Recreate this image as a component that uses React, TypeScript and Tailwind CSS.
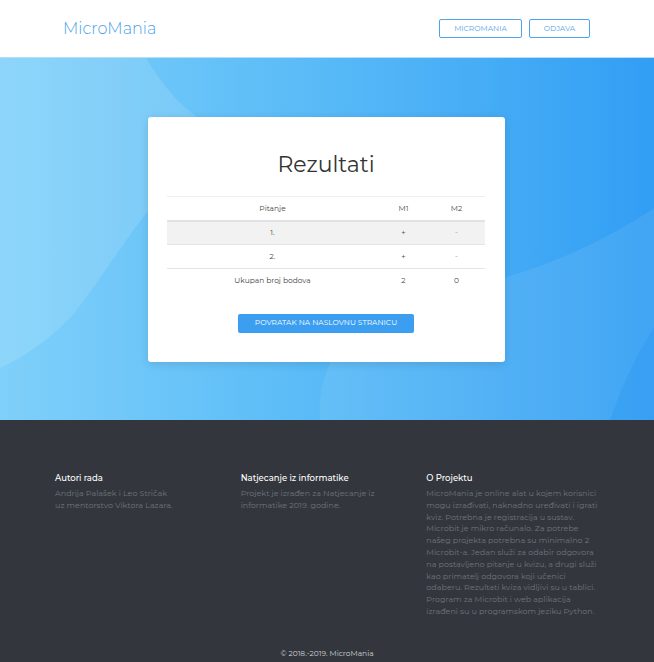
const font = { fontFamily: 'Montserrat, "Open Sans", "DejaVu Sans", sans-serif' };

const rows = [
  { q: '1.', m1: '+', m2: '-', shaded: true },
  { q: '2.', m1: '+', m2: '-', shaded: false },
];

const aboutLines = [
  'MicroMania je online alat u kojem korisnici',
  'mogu izrađivati, naknadno uređivati i igrati',
  'kviz. Potrebna je registracija u sustav.',
  'Microbit je mikro računalo. Za potrebe',
  'našeg projekta potrebna su minimalno 2',
  'Microbit-a. Jedan služi za odabir odgovora',
  'na postavljeno pitanje u kvizu, a drugi služi',
  'kao primatelj odgovora koji učenici',
  'odaberu. Rezultati kviza vidljivi su u tablici.',
  'Program za Microbit i web aplikacija',
  'izrađeni su u programskom jeziku Python.',
];

function HeroBackground() {
  return (
    <svg className="absolute inset-0 h-full w-full" viewBox="0 0 654 362" preserveAspectRatio="none">
      <defs>
        <linearGradient id="hero" x1="0" y1="0" x2="1" y2="0">
          <stop offset="0" stopColor="#7fd0fa" />
          <stop offset="0.45" stopColor="#5bbcf7" />
          <stop offset="1" stopColor="#329ef4" />
        </linearGradient>
      </defs>
      <rect width="654" height="362" fill="url(#hero)" />
      {/* light blob top-left */}
      <path d="M0 0 L146 0 C170 40 200 70 240 78 C160 110 120 200 70 260 C40 290 20 300 0 310 Z" fill="#ffffff" opacity="0.12" />
      {/* blob bottom-right */}
      <path d="M320 362 C315 300 360 250 420 240 C500 225 580 200 654 150 L654 362 Z" fill="#ffffff" opacity="0.08" />
      <path d="M610 362 C625 320 640 290 654 270 L654 362 Z" fill="#1d8fef" opacity="0.25" />
    </svg>
  );
}

export default function App() {
  return (
    <div className="w-[654px] min-h-[662px] bg-white" style={font}>
      {/* Header */}
      <header className="flex h-[58px] items-center justify-between border-b border-[#b5def7] pl-[63px] pr-[64px]">
        <span className="text-[16px] font-light text-[#4b9fe9]">MicroMania</span>
        <div className="flex gap-[7px]">
          <button className="h-[19px] w-[83px] rounded-[2px] border border-[#4fa3ec] text-[7.5px] text-[#4fa3ec]">
            MICROMANIA
          </button>
          <button className="h-[19px] w-[61px] rounded-[2px] border border-[#4fa3ec] text-[7.5px] text-[#4fa3ec]">
            ODJAVA
          </button>
        </div>
      </header>

      {/* Hero */}
      <section className="relative flex h-[362px] justify-center overflow-hidden pt-[59px]">
        <HeroBackground />
        <div className="relative -ml-[2px] h-[245px] w-[357px] rounded-[3px] bg-white px-[19px] pt-[34px] shadow-[0_2px_10px_rgba(0,0,0,0.12)]">
          <h1 className="text-center text-[22px] font-normal leading-[28px] text-[#333]">Rezultati</h1>
          <table className="mt-[17px] w-[318px] text-[7.5px] text-[#444]">
            <thead>
              <tr className="h-[24px] border-t border-b-2 border-t-[#eeeeee] border-b-[#e2e2e2]">
                <th className="w-[212px] font-normal">Pitanje</th>
                <th className="w-[50px] font-normal">M1</th>
                <th className="font-normal">M2</th>
              </tr>
            </thead>
            <tbody>
              {rows.map((r) => (
                <tr key={r.q} className={`h-[24px] border-b border-[#e4e4e4] text-center ${r.shaded ? 'bg-[#f2f2f2]' : ''}`}>
                  <td>{r.q}</td>
                  <td>{r.m1}</td>
                  <td className="text-[#999]">{r.m2}</td>
                </tr>
              ))}
              <tr className="h-[24px] text-center">
                <td>Ukupan broj bodova</td>
                <td>2</td>
                <td>0</td>
              </tr>
            </tbody>
          </table>
          <div className="mt-[21px] flex justify-center">
            <button className="h-[19px] w-[176px] rounded-[2px] bg-[#3b9ef1] text-[7.5px] text-white">
              POVRATAK NA NASLOVNU STRANICU
            </button>
          </div>
        </div>
      </section>

      {/* Footer */}
      <footer className="min-h-[242px] bg-[#33373d] pt-[52px] pb-[2px]">
        <div className="grid grid-cols-3 pl-[55px] pr-[42px]">
          <div>
            <h3 className="text-[8.5px] font-medium leading-[12px] text-white">Autori rada</h3>
            <p className="mt-[4px] text-[8px] leading-[11.8px] text-[#6e747b]">
              Andrija Palašek i Leo Stričak
              <br />
              uz mentorstvo Viktora Lazara.
            </p>
          </div>
          <div>
            <h3 className="text-[8.5px] font-medium leading-[12px] text-white">Natjecanje iz informatike</h3>
            <p className="mt-[4px] text-[8px] leading-[11.8px] text-[#6e747b]">
              Projekt je izrađen za Natjecanje iz
              <br />
              informatike 2019. godine.
            </p>
          </div>
          <div>
            <h3 className="text-[8.5px] font-medium leading-[12px] text-white">O Projektu</h3>
            <p className="mt-[4px] whitespace-nowrap text-[8px] leading-[11.8px] text-[#6e747b]">
              {aboutLines.map((line) => (
                <span key={line} className="block">
                  {line}
                </span>
              ))}
            </p>
          </div>
        </div>
        <p className="mt-[31px] text-center text-[7.5px] leading-[10px] text-[#d0d3d6]">© 2018.-2019. MicroMania</p>
      </footer>
    </div>
  );
}
